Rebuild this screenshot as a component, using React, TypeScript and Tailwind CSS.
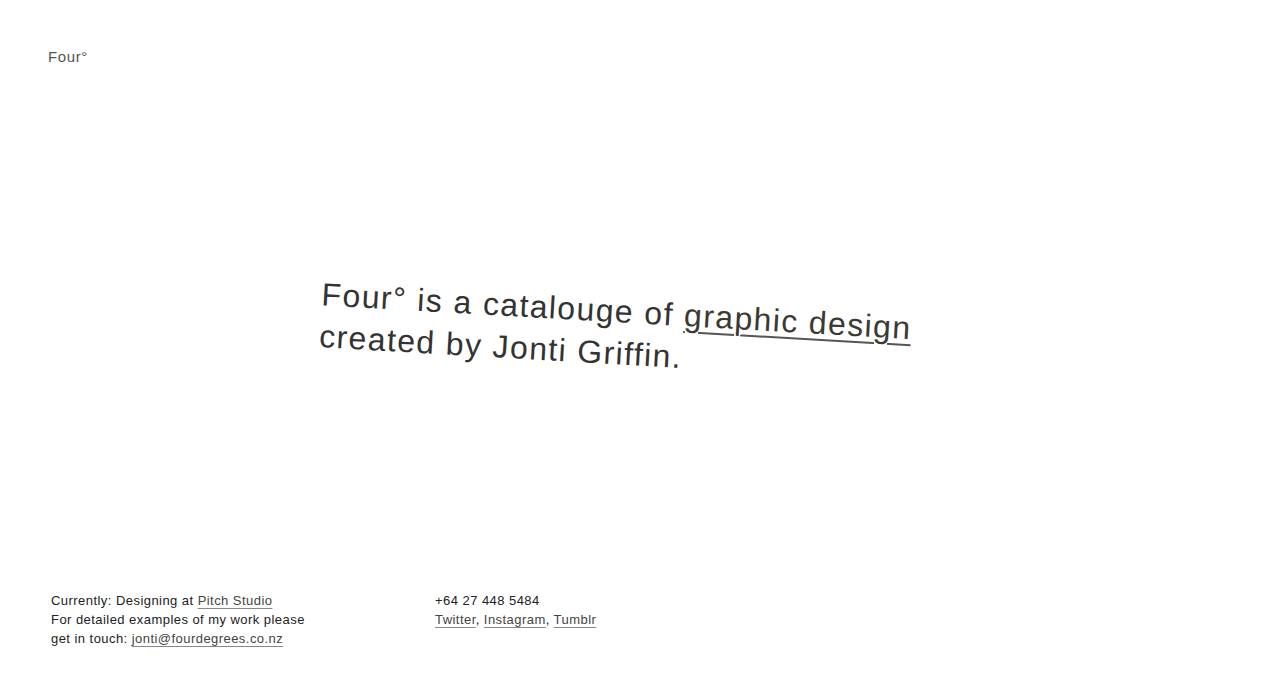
export default function App() {
  return (
    <div
      className="flex h-[699px] flex-col bg-white text-[#222]"
      style={{ fontFamily: '"Liberation Sans", Arial, sans-serif' }}
    >
      <header className="px-12 pt-[45px]">
        <a href="#" className="text-[15px] leading-[18px] tracking-[0.6px] text-[#555]">
          Four°
        </a>
      </header>

      <main className="flex flex-1 items-center justify-center">
        <h1 className="mr-[20px] mt-[6px] w-[620px] rotate-[3.3deg] text-[32px] leading-[42px] tracking-[1.4px] text-[#333]">
          Four° is a catalouge of{" "}
          <a
            href="#"
            className="text-[#3a3a32] underline decoration-[#555] decoration-[1.5px] underline-offset-[5px]"
          >
            graphic design
          </a>{" "}
          created by Jonti Griffin.
        </h1>
      </main>

      <footer className="flex px-[51px] pb-[51px] text-[13px] leading-[19px] tracking-[0.45px]">
        <div className="w-[384px]">
          <p>
            Currently: Designing at{" "}
            <a href="#" className="text-[#444] underline decoration-[#888] underline-offset-[3px]">
              Pitch Studio
            </a>
          </p>
          <p>For detailed examples of my work please</p>
          <p>
            get in touch:{" "}
            <a href="#" className="text-[#444] underline decoration-[#888] underline-offset-[3px]">
              jonti@fourdegrees.co.nz
            </a>
          </p>
        </div>
        <div>
          <p>+64 27 448 5484</p>
          <p>
            <a href="#" className="text-[#444] underline decoration-[#888] underline-offset-[3px]">
              Twitter
            </a>
            ,{" "}
            <a href="#" className="text-[#444] underline decoration-[#888] underline-offset-[3px]">
              Instagram
            </a>
            ,{" "}
            <a href="#" className="text-[#444] underline decoration-[#888] underline-offset-[3px]">
              Tumblr
            </a>
          </p>
        </div>
      </footer>
    </div>
  );
}
